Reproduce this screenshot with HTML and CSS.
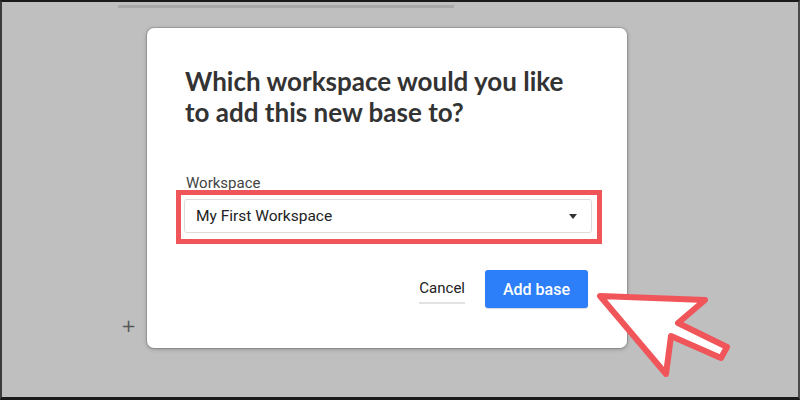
FILE: index.html
```html
<!DOCTYPE html>
<html>
<head>
<meta charset="utf-8">
<link rel="stylesheet" href="styles.css">
</head>
<body>
<div class="screen">
  <div class="backdrop">
    <div class="topbar"></div>
    <div class="plus">+</div>
  </div>
  <div class="dialog">
    <h1 class="title">Which workspace would you like to add this new base to?</h1>
    <div class="label">Workspace</div>
    <div class="field">
      <div class="select">
        <span>My First Workspace</span>
        <span class="caret"></span>
      </div>
      <div class="highlight"></div>
    </div>
    <div class="actions">
      <span class="cancel">Cancel</span>
      <span class="primary">Add base</span>
    </div>
  </div>
  <svg class="pointer" width="160" height="110" viewBox="590 285 160 110">
    <polygon points="600,296 705,300 678,323 727,347 721,358 671,336 666,374" fill="#fff" stroke="#f0555a" stroke-width="6" stroke-linejoin="round"/>
  </svg>
</div>
</body>
</html>
```
FILE: styles.css
```css
* { box-sizing: border-box; }
html, body { margin: 0; padding: 0; }
body { width: 800px; height: 400px; overflow: hidden; background: #bfbfbf; }
.screen {
  position: relative;
  width: 800px;
  height: 400px;
  background: #bfbfbf;
  border-top: 2px solid #1a1a1a;
  border-left: 2px solid #3a3a3a;
  border-right: 2px solid #4a4a4a;
  border-bottom: 3px solid #1a1a1a;
}
.backdrop { padding-left: 116px; padding-top: 3px; }
.topbar { width: 336px; height: 3px; background: #a9a9a9; }
.plus {
  margin-top: 309px;
  margin-left: 3px;
  width: 14px;
  font-family: "DejaVu Sans", sans-serif;
  font-size: 18px;
  line-height: 18px;
  color: #555;
}
.dialog {
  position: absolute;
  left: 145px;
  top: 26px;
  width: 480px;
  height: 320px;
  background: #fff;
  border-radius: 7px;
  box-shadow: 0 0 0 1px rgba(0,0,0,0.12), 0 1px 4px rgba(0,0,0,0.28);
  padding: 38px 35px 0 37px;
}
.title {
  margin: 0;
  font-family: Lato, sans-serif;
  font-weight: 700;
  font-size: 26px;
  line-height: 31px;
  color: #333;
  padding-left: 1px;
  width: 400px;
}
.label {
  margin-top: 47px;
  font-family: Roboto, sans-serif;
  font-size: 15px;
  line-height: 16px;
  color: #444;
  padding-left: 2px;
}
.field { position: relative; margin-top: 8px; }
.select {
  height: 34px;
  border: 1px solid #dcdcdc;
  border-radius: 3px;
  display: flex;
  align-items: center;
  justify-content: space-between;
  padding: 0 14px 0 11px;
  font-family: Roboto, sans-serif;
  font-size: 15.5px;
  color: #222;
}
.caret {
  width: 0; height: 0;
  border-left: 4px solid transparent;
  border-right: 4px solid transparent;
  border-top: 5px solid #333;
}
.highlight {
  position: absolute;
  left: -8px; top: -9px; right: -10px; bottom: -11px;
  border: 5px solid #f0555a;
}
.actions {
  margin-top: 37px;
  display: flex;
  justify-content: flex-end;
  align-items: center;
  gap: 20px;
  padding-right: 4px;
  font-family: Roboto, sans-serif;
  font-size: 15px;
}
.cancel {
  color: #222;
  padding: 4px 0 5px;
  border-bottom: 2px solid #e2e2e2;
}
.primary {
  width: 103px;
  height: 38px;
  display: flex;
  align-items: center;
  justify-content: center;
  background: #2d7ff9;
  border-radius: 3px;
  color: #fff;
  font-weight: 500;
  font-size: 16px;
  box-shadow: 0 1px 1px rgba(0,0,0,0.15);
}
.pointer { position: absolute; left: 588px; top: 283px; }
```
